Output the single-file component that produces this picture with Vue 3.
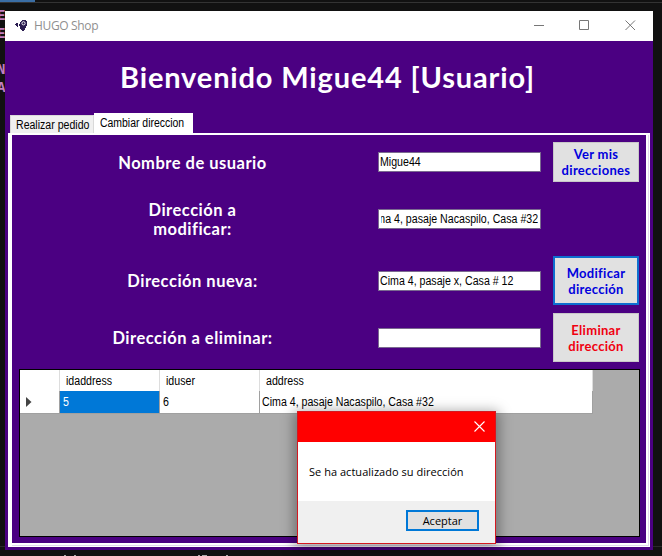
<script setup>
const rows = [
  { label: ['Nombre de usuario'], value: 'Migue44', button: ['Ver mis', 'direcciones'], kind: 'view', cls: 'l1' },
  { label: ['Dirección a', 'modificar:'], value: 'Cima 4, pasaje Nacaspilo, Casa #32', end: true, cls: 'l2' },
  { label: ['Dirección nueva:'], value: 'Cima 4, pasaje x, Casa # 12', button: ['Modificar', 'dirección'], kind: 'focus', cls: 'l3' },
  { label: ['Dirección a eliminar:'], value: '', button: ['Eliminar', 'dirección'], kind: 'danger', cls: 'l4' },
]
const behind = [['E', 'e1'], ['E', 'e2'], ['N', 'e3'], ['A', 'e4']]
</script>

<template>
  <div class="desktop">
    <div class="taskline"><i></i></div>
    <span v-for="b in behind" :key="b[1]" class="code" :class="b[1]">{{ b[0] }}</span>
    <div class="bottomline"></div>
    <div class="specks"><i class="s1"></i><i class="s2"></i><i class="s3"></i><i class="s4"></i><i class="s5"></i></div>
    <main class="window">
      <header class="titlebar">
        <svg class="logo" width="14" height="12" viewBox="0 0 14 12">
          <path d="M6 2V1h1V0h4v1h1v5h-1v2h-1v2H9v1H7v-1H6V9H5V6H4V4h1V2z" fill="#2a1c50" />
          <path d="M0 4h1V3h2v4H2V6H1V5H0z" fill="#2a1c50" />
          <circle cx="8.5" cy="3.3" r="1.6" fill="#2a1c50" stroke="#fff" stroke-width=".9" />
        </svg>
        <span class="caption">HUGO Shop</span>
        <svg class="controls" width="106" height="12" viewBox="0 0 106 12" fill="none" stroke="#777">
          <path d="M0 6.5h10M45.5 1.5h9v9h-9zM91.5 1.5l9.5 9.5M101 1.5L91.5 11" />
        </svg>
      </header>
      <h1>Bienvenido Migue44 [Usuario]</h1>
      <nav>
        <div class="tab"><span class="ms">Realizar pedido</span></div>
        <div class="tab active"><span class="ms">Cambiar direccion</span></div>
      </nav>
      <section class="page">
        <div class="form">
          <template v-for="r in rows" :key="r.cls">
            <div class="label" :class="r.cls"><span v-for="t in r.label" :key="t">{{ t }}</span></div>
            <div class="field"><div class="clip" :class="{ end: r.end }"><span class="ms">{{ r.value }}</span></div></div>
            <button v-if="r.button" :class="r.kind"><span v-for="t in r.button" :key="t">{{ t }}</span></button>
            <div v-else></div>
          </template>
        </div>
        <div class="grid">
          <div class="tr head">
            <div></div>
            <div><span class="ms">idaddress</span></div>
            <div><span class="ms">iduser</span></div>
            <div><span class="ms">address</span></div>
          </div>
          <div class="tr">
            <div class="mark"><svg width="6" height="10" viewBox="0 0 6 10"><path d="M0 0L5.5 5L0 10z" fill="#444" /></svg></div>
            <div class="sel"><span class="ms">5</span></div>
            <div><span class="ms">6</span></div>
            <div class="addr"><span class="ms">Cima 4, pasaje Nacaspilo, Casa #32</span></div>
          </div>
        </div>
      </section>
    </main>
    <aside class="dialog">
      <div class="dtitle"><svg width="11" height="11" viewBox="0 0 11 11" stroke="#fff" stroke-width="1.1"><path d="M.5 .5l10 10M10.5 .5l-10 10" /></svg></div>
      <div class="dbody"><span>Se ha actualizado su dirección</span></div>
      <div class="dfoot"><div class="ok">Aceptar</div></div>
    </aside>
  </div>
</template>

<style>
body { background: #111; overflow: hidden; }
</style>
<style scoped>
* { box-sizing: border-box; }
.desktop { position: relative; width: 662px; height: 556px; background: #111; overflow: hidden; padding: 11px 9px 6px 5px; font: 12px "Liberation Sans", sans-serif; color: #000; }
.ms { display: inline-block; transform: scaleX(.885); transform-origin: left center; }
.taskline { position: absolute; left: 0; top: 0; width: 662px; height: 3px; border-bottom: 1px solid #333; }
.taskline i { display: block; width: 35px; height: 2px; background: #3a6ea5; }
.bottomline { position: absolute; left: 0; top: 546px; width: 662px; height: 1px; background: #2a2a2a; }
.code { position: absolute; left: -3px; font: bold 14px/14px "Liberation Mono", monospace; color: #c27fc0; }
.e1 { top: 9px; } .e2 { top: 27px; } .e3 { top: 63px; } .e4 { top: 81px; }
.specks i { position: absolute; top: 555px; height: 1px; width: 2px; background: #aaa; }
.specks .s1 { left: 64px; } .specks .s2 { left: 74px; } .specks .s3 { left: 198px; } .specks .s4 { left: 202px; width: 5px; } .specks .s5 { left: 226px; }
.window { display: flex; flex-direction: column; position: relative; width: 648px; height: 539px; background: #4b0082; }
.titlebar { flex: none; height: 30px; background: #fff; display: flex; align-items: center; padding-left: 10px; }
.logo { margin-top: -1px; }
.caption { font: 12px/16px "Open Sans", sans-serif; letter-spacing: -.35px; color: #8f8f8f; margin: 0 0 0 5px; white-space: nowrap; }
.controls { margin-left: auto; margin-right: 13px; margin-top: -2px; }
h1 { margin: 0; height: 72px; flex: none; font: bold 29px/71px Lato, sans-serif; letter-spacing: .85px; color: #fff; padding-left: 115px; white-space: nowrap; }
nav { flex: none; height: 20px; display: flex; align-items: flex-end; padding-left: 5px; white-space: nowrap; }
.tab { width: 84px; height: 18px; background: #f0f0f0; padding: 2px 0 0 5px; line-height: 14px; border: 1px solid #d9d9d9; border-bottom: 0; }
.tab.active { width: 99px; height: 20px; background: #fff; border: 0; padding: 3px 0 0 6px; }
.tab.active .ms { transform: scaleX(.87); }
.tab:not(.active) .ms { transform: scaleX(.88); }
.page { position: relative; margin: 0 3px; height: 414px; flex: none; border: 4px solid #fff; border-top-width: 2px; padding: 7px 6px 6px 7px; background: #4b0082; }
.page::after { content: ""; position: absolute; inset: 0 -3px -3px 0; border: solid #e3d6ee; border-width: 0 1px 1px 0; }
.form { display: grid; grid-template-columns: 347px 163px 86px; column-gap: 12px; grid-template-rows: 40px 74px 49px 57px; align-items: center; width: 621px; }
.label { color: #fff; font: bold 16.5px/19px Lato, sans-serif; letter-spacing: .5px; display: flex; flex-direction: column; align-items: center; white-space: nowrap; padding-top: 2px; }
.field { height: 20px; background: #fff; border: 1px solid #7a6a90; padding: 0 2px 0 1px; }
.clip { overflow: hidden; display: flex; height: 18px; line-height: 18px; white-space: nowrap; }
.clip.end { justify-content: flex-end; margin-left: 1px; }
.clip.end .ms { transform-origin: right center; }
.clip span { flex: none; }
button { align-self: stretch; padding: 0; border: 1px solid #c8c8c8; background: #e1e1e1; color: #00d; font: bold 13px/16px Lato, sans-serif; letter-spacing: .3px; display: flex; flex-direction: column; align-items: center; justify-content: center; }
button.focus { border: 2px solid #0f6fd0; }
button.danger { color: #f00010; margin-top: 8px; }
.label.l4 { padding-top: 10px; }
.label.l4 + .field { margin-top: 8px; }
.grid { margin-top: 7px; width: 621px; height: 168px; border: 1px solid #000; background: #ababab; }
.tr { display: grid; grid-template-columns: 40px 100px 100px 333px; height: 21px; white-space: nowrap; }
.tr > div { background: #fff; border-right: 1px solid #a0a0a0; border-bottom: 1px solid #a0a0a0; padding-left: 3px; line-height: 22px; }
.tr.head > div { padding-left: 6px; border-right-color: #ddd; line-height: 22px; }
.tr > .mark { display: flex; align-items: center; padding-left: 6px; }
.tr > .addr { padding-left: 2px; }
.tr > .sel { background: #0078d7; color: #fff; }
.dialog { position: absolute; left: 297px; top: 411px; width: 199px; height: 133px; border: 1px solid #d41820; background: #fff; box-shadow: 0 3px 12px 3px rgba(0,0,0,.35); display: flex; flex-direction: column; font-family: "Open Sans", sans-serif; font-size: 11px; }
.dtitle { height: 30px; background: #f00; display: flex; justify-content: flex-end; align-items: center; padding-right: 10px; padding-bottom: 2px; }
.dbody { flex: 1; display: flex; align-items: center; padding-left: 11px; white-space: nowrap; letter-spacing: .03px; }
.dfoot { height: 42px; background: #f0f0f0; padding: 9px 16px 0 0; display: flex; justify-content: flex-end; }
.ok { width: 73px; height: 21px; border: 2px solid #0078d7; background: #e1e1e1; text-align: center; line-height: 18px; }
</style>
